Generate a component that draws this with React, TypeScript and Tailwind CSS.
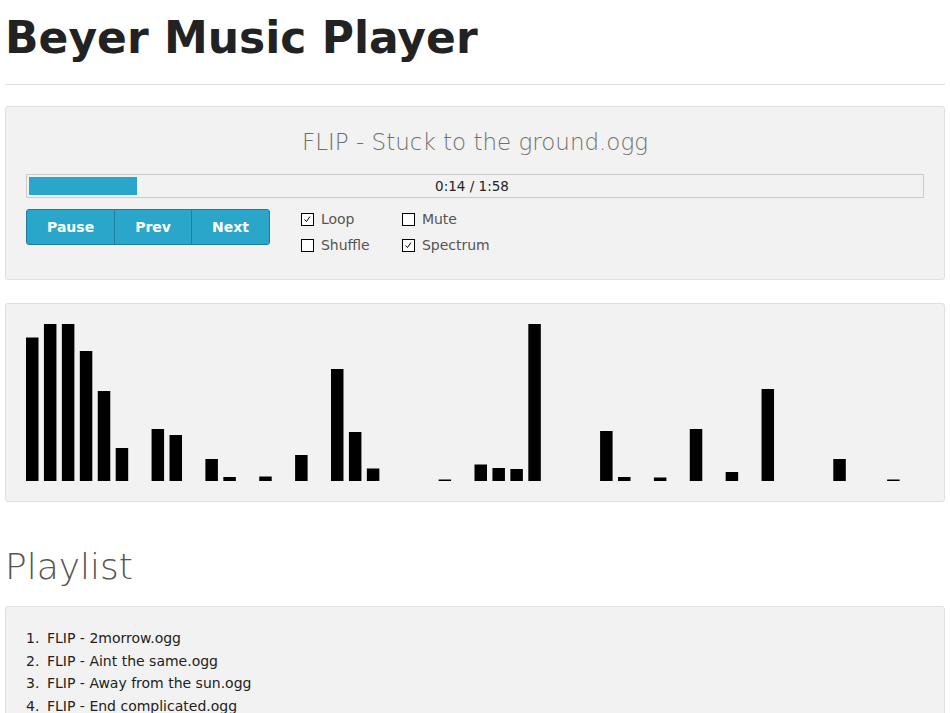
import React from 'react';

// spectrum snapshot: bar index -> height in px (canvas is 157px tall, 50 slots)
const spectrum: Record<number, number> = {
  0: 143.5, 1: 157, 2: 157, 3: 130, 4: 90, 5: 33, 7: 52, 8: 46, 10: 22, 11: 4,
  13: 4.5, 15: 26, 17: 112, 18: 49, 19: 12.5, 23: 1.5, 25: 16.5, 26: 13, 27: 12,
  28: 157, 32: 50, 33: 4, 35: 3.5, 37: 52, 39: 9, 41: 92, 45: 22, 48: 1.5,
};

const playlist = [
  'FLIP - 2morrow.ogg',
  'FLIP - Aint the same.ogg',
  'FLIP - Away from the sun.ogg',
  'FLIP - End complicated.ogg',
];

const Checkbox = ({ label, checked }: { label: string; checked?: boolean }) => (
  <label className="flex h-[26px] items-center">
    <span className="flex h-[13px] w-[13px] items-start justify-start border border-black bg-white">
      {checked && (
        <svg width="11" height="11" viewBox="0 0 11 11">
          <path d="M2.5 5.5 L4.5 7.5 L8 2.5" fill="none" stroke="#000" strokeWidth="1" />
        </svg>
      )}
    </span>
    <span className="ml-[7px] text-[14px] text-[#555]">{label}</span>
  </label>
);

export default function App() {
  const slot = 897 / 50;

  return (
    <div className="px-[5px] font-['DejaVu_Sans',sans-serif] text-[#222]">
      <h1 className="pt-[14px] text-[44px] leading-[48px] font-bold">Beyer Music Player</h1>
      <hr className="mt-[22px] border-[#dddddd]" />

      {/* player */}
      <div className="mt-[21px] rounded-[3px] border border-[#e0e0e0] bg-[#f2f2f2] px-[20px] pt-[20px] pb-[21px]">
        <h3 className="text-center text-[23px] leading-[30px] font-extralight text-[#6f6f6f]">
          FLIP - Stuck to the ground.ogg
        </h3>

        <div className="relative mt-[17px] h-[24px] border border-[#cccccc] p-[2px]">
          <div className="h-full w-[108px] bg-[#2ba6cb]" />
          <div className="absolute inset-0 flex items-center justify-center pr-[6px] text-[13.5px] text-[#222]">
            0:14 / 1:58
          </div>
        </div>

        <div className="mt-[8px] flex">
          <div className="mt-[3px] flex h-[36px]">
            <button className="rounded-l-[3px] border border-[#1f7f9c] bg-[#2ba6cb] px-[20px] text-[14px] font-bold text-white">
              Pause
            </button>
            <button className="-ml-px border border-[#1f7f9c] bg-[#2ba6cb] px-[20px] text-[14px] font-bold text-white">
              Prev
            </button>
            <button className="-ml-px rounded-r-[3px] border border-[#1f7f9c] bg-[#2ba6cb] px-[20px] text-[14px] font-bold text-white">
              Next
            </button>
          </div>
          <div className="ml-[31px] grid grid-cols-[101px_auto]">
            <Checkbox label="Loop" checked />
            <Checkbox label="Mute" />
            <Checkbox label="Shuffle" />
            <Checkbox label="Spectrum" checked />
          </div>
        </div>
      </div>

      {/* spectrum */}
      <div className="mt-[23px] rounded-[3px] border border-[#e0e0e0] bg-[#f2f2f2] p-[20px]">
        <svg width="897" height="157" viewBox="0 0 897 157" className="block">
          {Object.entries(spectrum).map(([i, h]) => (
            <rect key={i} x={Number(i) * slot} y={157 - h} width={12.5} height={h} fill="#000" />
          ))}
        </svg>
      </div>

      <h2 className="mt-[41px] text-[36px] leading-[48px] font-extralight text-[#555]">Playlist</h2>

      <div className="mt-[15px] rounded-[3px] border border-[#e0e0e0] bg-[#f2f2f2] p-[20px]">
        <ol className="text-[14px] leading-[22.5px] text-[#222]">
          {playlist.map((song, i) => (
            <li key={song} className="flex">
              <span className="w-[21px]">{i + 1}.</span>
              <span>{song}</span>
            </li>
          ))}
        </ol>
      </div>
    </div>
  );
}
